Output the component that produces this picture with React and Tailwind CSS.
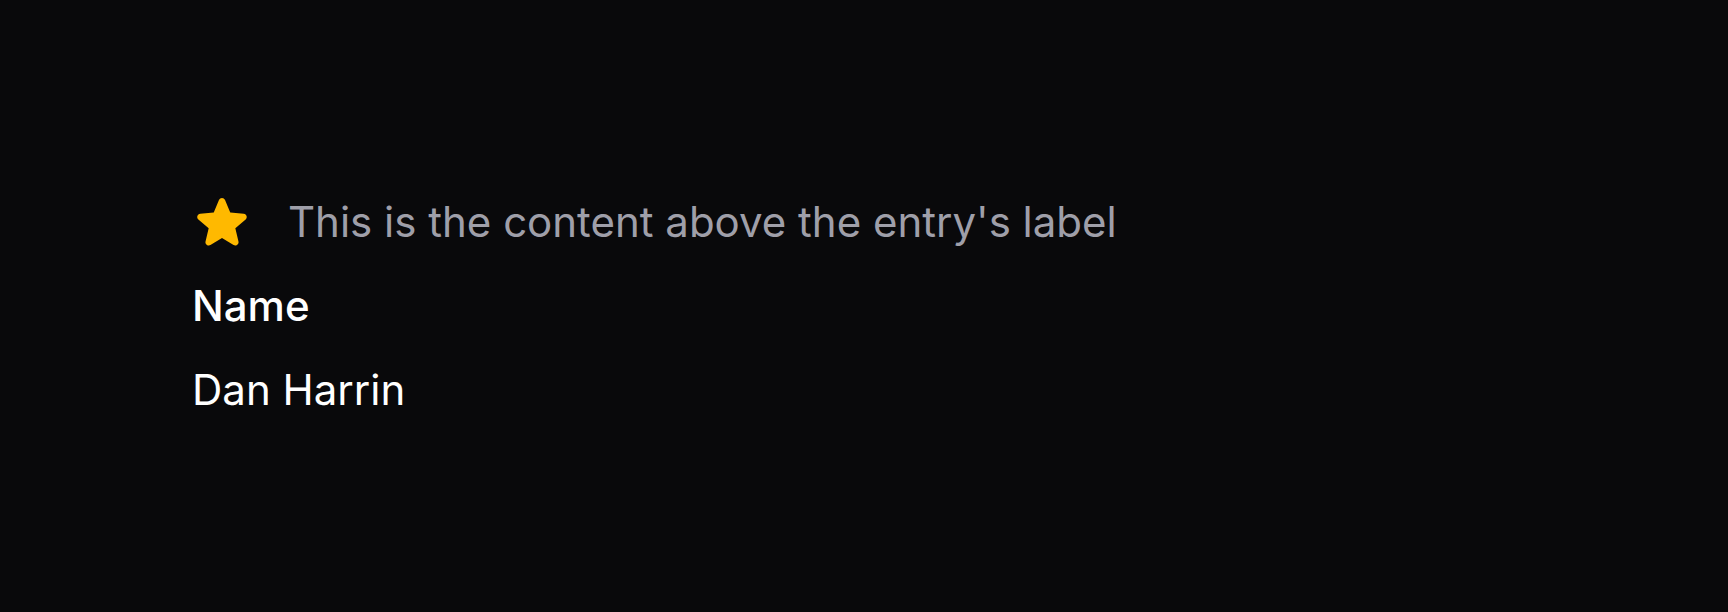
import React from 'react';

const StarIcon = ({ className }) => (
  <svg viewBox="0 0 24 24" fill="currentColor" className={className} aria-hidden="true">
    <path
      fillRule="evenodd"
      clipRule="evenodd"
      d="M10.788 3.21c.448-1.077 1.976-1.077 2.424 0l2.082 5.006 5.404.434c1.164.093 1.636 1.545.749 2.305l-4.117 3.527 1.257 5.273c.271 1.136-.964 2.033-1.96 1.425L12 18.354 7.373 21.18c-.996.608-2.231-.29-1.96-1.425l1.257-5.273-4.117-3.527c-.887-.76-.415-2.212.749-2.305l5.404-.434 2.082-5.005Z"
    />
  </svg>
);

const App = () => {
  return (
    <div
      className="min-h-[612px] w-full bg-[#09090b] pl-[192px] pt-[192px]"
      style={{ fontFamily: 'Inter, "Noto Sans", sans-serif' }}
    >
      <div className="flex flex-col gap-[24px]">
        {/* content above the label */}
        <div className="flex items-center gap-[36px]">
          <StarIcon className="h-[60px] w-[60px] shrink-0 text-amber-400" />
          <span className="text-[42px] leading-[60px] text-zinc-400">
            This is the content above the entry's label
          </span>
        </div>

        <div className="text-[42px] font-medium leading-[60px] text-white">Name</div>

        <div className="text-[42px] leading-[60px] text-white">Dan Harrin</div>
      </div>
    </div>
  );
};

export default App;
